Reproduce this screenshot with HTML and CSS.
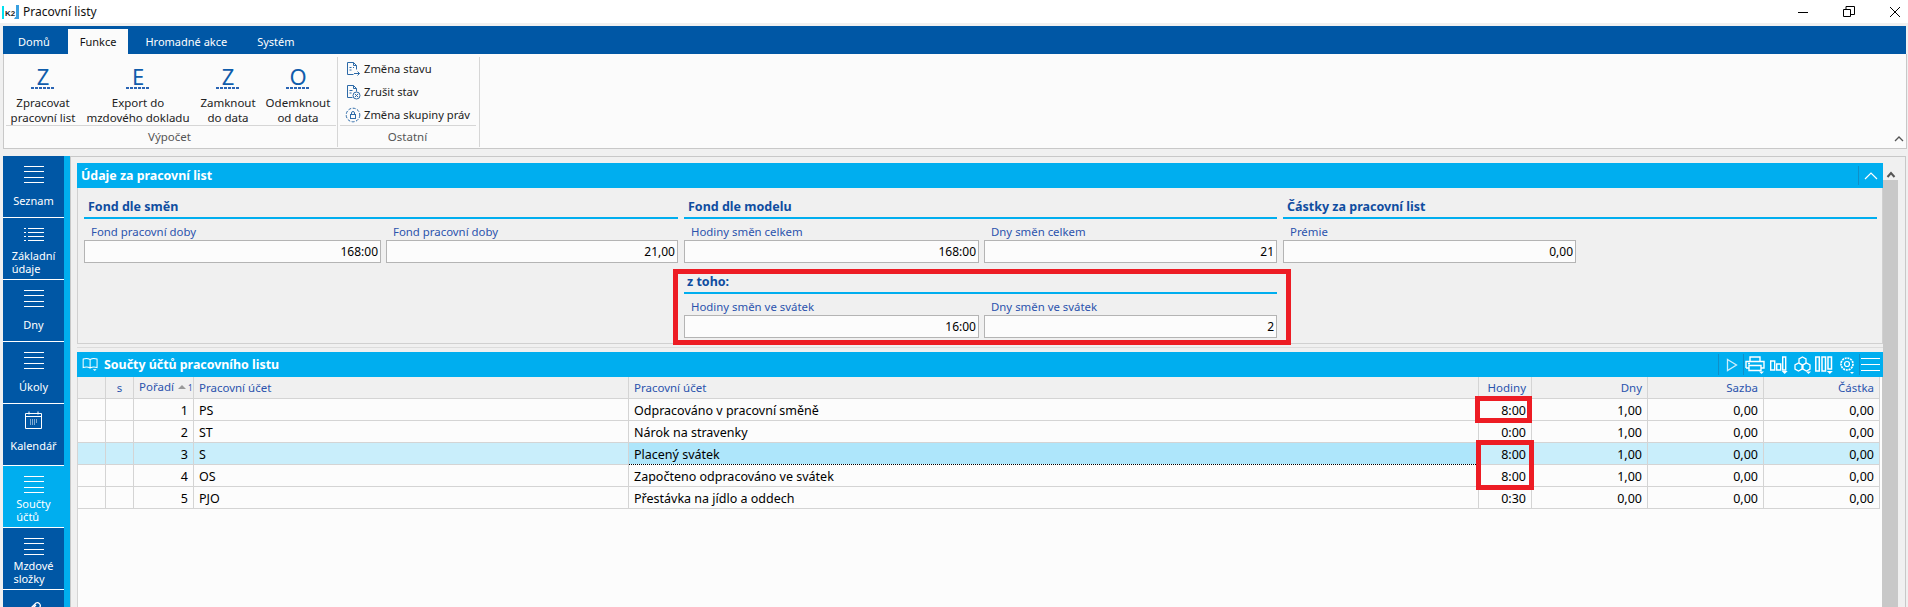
FILE: index.html
```html
<!DOCTYPE html>
<html lang="cs">
<head>
<meta charset="utf-8">
<title>Pracovní listy</title>
<link rel="stylesheet" href="styles.css">
</head>
<body>
<header class="titlebar">
  <svg class="logo" width="18" height="16" viewBox="0 0 18 16"><rect x="0" y="2" width="2" height="13" fill="#00e0f0"/><path d="M14 1h3v14h-5l2-3z" fill="#3aa0e0"/><rect x="2" y="4" width="12" height="9" fill="#fff"/><text x="3" y="11.500" class="logo-text">K2</text></svg>
  <span class="title">Pracovní listy</span>
  <div class="winbtns">
    <svg width="12" height="12" viewBox="0 0 12 12"><path d="M1 6.500h10" stroke="#000"/></svg>
    <svg width="12" height="12" viewBox="0 0 12 12"><path d="M.5 3.500h7v7h-7zM3 3V.5h8.500v8H8" fill="none" stroke="#000"/></svg>
    <svg width="12" height="12" viewBox="0 0 12 12"><path d="M1 1l10 10M11 1L1 11" stroke="#000"/></svg>
  </div>
</header>
<nav class="tabs">
  <span class="tab">Domů</span>
  <span class="tab active">Funkce</span>
  <span class="tab">Hromadné akce</span>
  <span class="tab">Systém</span>
</nav>
<section class="ribbon">
  <div class="group">
    <div class="group-body">
      <div class="bigbtn btn-a"><span class="bigicon">Z</span><span class="biglabel">Zpracovat<br>pracovní list</span></div>
      <div class="bigbtn btn-b"><span class="bigicon">E</span><span class="biglabel">Export do<br>mzdového dokladu</span></div>
      <div class="bigbtn btn-c"><span class="bigicon">Z</span><span class="biglabel">Zamknout<br>do data</span></div>
      <div class="bigbtn btn-d"><span class="bigicon">O</span><span class="biglabel">Odemknout<br>od data</span></div>
    </div>
    <div class="group-title">Výpočet</div>
  </div>
  <div class="group group-small">
    <div class="group-body small-list">
      <div class="smallbtn"><svg width="16" height="16" viewBox="0 0 16 16" fill="none" stroke="#2d6aa8"><path d="M2.500 1.500h6l3 3v4M2.500 1.500v12h6M8.500 1.500v3h3M4.500 6.500h2M4.500 9h2M8 6.500h1"/><path d="M9 12.500h5.500M12.500 10.500l2 2-2 2"/></svg>Změna stavu</div>
      <div class="smallbtn"><svg width="16" height="16" viewBox="0 0 16 16" fill="none" stroke="#2d6aa8"><path d="M2.500 1.500h6l3 3v3M2.500 1.500v12h5M8.500 1.500v3h3M4.500 6.500h3M4.500 9h2"/><circle cx="11.500" cy="11.500" r="3.500"/><path d="M10 10l3 3M13 10l-3 3"/></svg>Zrušit stav</div>
      <div class="smallbtn"><svg width="16" height="16" viewBox="0 0 16 16" fill="none" stroke="#2d6aa8"><circle cx="8" cy="8" r="6.800" stroke-dasharray="3 1.500"/><rect x="5.500" y="7.500" width="5" height="4"/><path d="M6.500 7.500V6a1.500 1.500 0 0 1 3 0v1.500"/></svg>Změna skupiny práv</div>
    </div>
    <div class="group-title">Ostatní</div>
  </div>
  <svg class="collapse" width="10" height="6" viewBox="0 0 10 6"><path d="M1 5l4-4 4 4" fill="none" stroke="#555" stroke-width="1.300"/></svg>
</section>
<main class="main">
  <aside class="sidebar">
    <div class="navitem"><span class="lines"></span><span class="navlabel">Seznam</span></div>
    <div class="navitem"><span class="lines bullets"></span><span class="navlabel">Základní<br>údaje</span></div>
    <div class="navitem"><span class="lines"></span><span class="navlabel">Dny</span></div>
    <div class="navitem"><span class="lines"></span><span class="navlabel">Úkoly</span></div>
    <div class="navitem"><svg class="calicon" width="17" height="18" viewBox="0 0 17 18" fill="none" stroke="#fff"><path d="M.5 2.500h16v15H.5zM.5 5.500h16M4 .5v3M13 .5v3"/><path d="M5 9h8M5 11h8M5 13h6" stroke-dasharray="1 1"/></svg><span class="navlabel">Kalendář</span></div>
    <div class="navitem current"><span class="lines"></span><span class="navlabel">Součty<br>účtů</span></div>
    <div class="navitem"><span class="lines"></span><span class="navlabel">Mzdové<br>složky</span></div>
    <div class="navitem"><svg class="clipicon" width="20" height="20" viewBox="0 0 20 20" fill="none" stroke="#fff" stroke-width="1.300"><path d="M4 13l8-8a3 3 0 0 1 4 4l-9 9a2 2 0 0 1-3-3l8-8"/></svg></div>
  </aside>
  <div class="strip"></div>
  <div class="content">
    <div class="panels">
      <section class="panel">
        <div class="bar">
          <span class="bar-title">Údaje za pracovní list</span>
          <span class="bar-end"><svg width="14" height="8" viewBox="0 0 14 8"><path d="M1 7l6-6 6 6" fill="none" stroke="#fff" stroke-width="1.200"/></svg></span>
        </div>
        <div class="form">
          <div class="sections">
            <div class="sec sec-a">
              <h3 class="sec-title">Fond dle směn</h3>
              <div class="fields">
                <div class="field f1"><label>Fond pracovní doby</label><div class="input">168:00</div></div>
                <div class="field f2"><label>Fond pracovní doby</label><div class="input">21,00</div></div>
              </div>
            </div>
            <div class="sec sec-b">
              <h3 class="sec-title">Fond dle modelu</h3>
              <div class="fields">
                <div class="field f3"><label>Hodiny směn celkem</label><div class="input">168:00</div></div>
                <div class="field f4"><label>Dny směn celkem</label><div class="input">21</div></div>
              </div>
              <div class="sub">
                <h3 class="sec-title sub-title">z toho:</h3>
                <div class="fields">
                  <div class="field f3"><label>Hodiny směn ve svátek</label><div class="input">16:00</div></div>
                  <div class="field f4"><label>Dny směn ve svátek</label><div class="input">2</div></div>
                </div>
                <div class="redbox form-red"></div>
              </div>
            </div>
            <div class="sec sec-c">
              <h3 class="sec-title">Částky za pracovní list</h3>
              <div class="fields">
                <div class="field f5"><label>Prémie</label><div class="input">0,00</div></div>
              </div>
            </div>
          </div>
        </div>
      </section>
      <div class="divider"></div>
      <section class="grid-panel">
        <div class="bar">
          <svg class="book" width="17" height="15" viewBox="0 0 22 19" fill="none" stroke="#fff" stroke-width="1.300"><path d="M10.500 3C8 1.500 4 1.500 1.500 2.500v11c2.500-1 6.500-1 9 .5 2.500-1.500 6.500-1.500 9-.5v-11c-2.500-1-6.500-1-9 .5zM10.500 3v11"/><path d="M14 15.500h5l-2.500 2.500z" fill="#fff" stroke="none"/></svg>
          <span class="bar-title">Součty účtů pracovního listu</span>
          <span class="tools">
            <span class="sep"></span>
            <svg class="t-play" width="12" height="14" viewBox="0 0 12 14"><path d="M1.500 1.500l9 5.500-9 5.500z" fill="none" stroke="#cdeefb" stroke-width="1.300"/></svg>
            <span class="sep"></span>
            <svg class="t-print" width="20" height="18" viewBox="0 0 20 18" fill="none" stroke="#fff" stroke-width="1.400"><path d="M5 5V1h10v4M1 12V5.500h18V12h-3M4 12H1M4 9.500h12v5H4zM3 7.500h2"/><path d="M14 15.500h5l-2.500 2.500z" fill="#fff" stroke="none"/></svg>
            <svg class="t-bars" width="18" height="18" viewBox="0 0 18 18" fill="none" stroke="#fff" stroke-width="1.400"><path d="M.7 5h4v9h-4zM6.700 8h4v6h-4zM12.700 1h3v13h-3z"/><path d="M11.700 15h6l-3 3z" fill="#fff" stroke="none"/></svg>
            <svg class="t-cubes" width="19" height="18" viewBox="0 0 19 18" fill="none" stroke="#fff" stroke-width="1.300"><path d="M9.500 1l3.500 2v4L9.500 9 6 7V3zM5.500 7L9 9v4l-3.500 2L2 13V9zM13.500 7L17 9v4l-3.500 2-3.500-2V9z"/><path d="M13 15.500h5L15.500 18z" fill="#fff" stroke="none"/></svg>
            <svg class="t-cols" width="18" height="18" viewBox="0 0 18 18" fill="none" stroke="#fff" stroke-width="1.500"><path d="M.8 1h3.500v14H.8zM7 1h3.500v14H7zM13 1h3.500v12H13z"/><path d="M11.800 15h6l-3 3z" fill="#fff" stroke="none"/></svg>
            <svg class="t-gear" width="16" height="18" viewBox="0 0 16 18" fill="none" stroke="#fff"><circle cx="8" cy="8" r="6" stroke-width="1.700" stroke-dasharray="2 .8"/><circle cx="8" cy="8" r="2.500" stroke-width="1.200"/><path d="M11 16h4l-2 2z" fill="#fff" stroke="none"/></svg>
            <span class="sep"></span>
            <span class="t-menu"></span>
          </span>
        </div>
        <div class="tablewrap">
          <table class="table">
            <colgroup><col class="c1"><col class="c2"><col class="c3"><col class="c4"><col class="c5"><col class="c6"><col class="c7"><col class="c7"><col class="c7"></colgroup>
            <thead>
              <tr><th></th><th class="ctr">s</th><th class="order">Pořadí <span class="sort"></span><span class="sortn">1</span></th><th>Pracovní účet</th><th>Pracovní účet</th><th class="num">Hodiny</th><th class="num">Dny</th><th class="num">Sazba</th><th class="num">Částka</th></tr>
            </thead>
            <tbody>
              <tr><td></td><td></td><td class="num">1</td><td>PS</td><td>Odpracováno v pracovní směně</td><td class="num">8:00</td><td class="num">1,00</td><td class="num">0,00</td><td class="num">0,00</td></tr>
              <tr><td></td><td></td><td class="num">2</td><td>ST</td><td>Nárok na stravenky</td><td class="num">0:00</td><td class="num">1,00</td><td class="num">0,00</td><td class="num">0,00</td></tr>
              <tr class="sel"><td></td><td></td><td class="num">3</td><td>S</td><td class="focus">Placený svátek</td><td class="num">8:00</td><td class="num">1,00</td><td class="num">0,00</td><td class="num">0,00</td></tr>
              <tr><td></td><td></td><td class="num">4</td><td>OS</td><td>Započteno odpracováno ve svátek</td><td class="num">8:00</td><td class="num">1,00</td><td class="num">0,00</td><td class="num">0,00</td></tr>
              <tr><td></td><td></td><td class="num">5</td><td>PJO</td><td>Přestávka na jídlo a oddech</td><td class="num">0:30</td><td class="num">0,00</td><td class="num">0,00</td><td class="num">0,00</td></tr>
            </tbody>
          </table>
          <div class="redbox red-one"></div>
          <div class="redbox red-two"></div>
        </div>
      </section>
    </div>
    <div class="scroll">
      <svg width="10" height="8" viewBox="0 0 10 8"><path d="M1.500 6.500L5 2.500l3.500 4" fill="none" stroke="#555" stroke-width="2"/></svg>
      <div class="thumb"></div>
    </div>
  </div>
</main>
</body>
</html>
```
FILE: styles.css
```css
* { box-sizing: border-box; }
html, body { margin: 0; height: 100%; }
body {
  width: 1908px; height: 607px; overflow: hidden;
  display: flex; flex-direction: column;
  background: #f0f0f0; color: #000;
  font: 12px/15px "Noto Sans", "Open Sans", sans-serif;
}
.titlebar {
  height: 23px; flex: none; background: #fff;
  display: flex; align-items: center; padding-left: 2px;
}
.logo-text { font: bold 8px "Liberation Sans", sans-serif; fill: #222; }
.title { margin-left: 3px; color: #111; }
.winbtns { margin-left: auto; display: flex; gap: 34px; padding-right: 7px; }
.tabs {
  height: 28px; flex: none; margin: 3px 2px 0 3px; background: #0057a5;
  display: flex; align-items: flex-end; color: #fff; font-size: 11px;
}
.tab { height: 25px; padding: 0 15px; line-height: 25px; }
.tab:first-child { margin-right: 3px; }
.tab.active { background: #fbfbfb; color: #111; padding: 0 12px; margin-right: 2px; }
.ribbon {
  height: 95px; flex: none; margin: 0 1px 0 3px; background: #fbfbfb;
  border: 1px solid #c8c8c8; border-top: 0; font-size: 11.5px;
  display: flex; padding: 3px 0 0 2px; position: relative; color: #222;
}
.group { border-right: 1px solid #d6d6d6; padding-right: 1px; height: 90px; display: flex; flex-direction: column; }
.group-small { margin-left: 2px; width: 140px; }
.group-body { height: 69px; flex: none; display: flex; border-bottom: 1px solid #d6d6d6; }
.group-title { height: 20px; text-align: center; line-height: 21px; color: #555; padding-right: 3px; }
.bigbtn { display: flex; flex-direction: column; align-items: center; }
.btn-a { width: 74px; } .btn-b { width: 116px; } .btn-c { width: 64px; } .btn-d { width: 76px; }
.bigicon {
  width: 24px; height: 24px; flex: none; margin-top: 8px; text-align: center;
  font-size: 22px; line-height: 22px; color: #0f5cab;
  background: repeating-linear-gradient(90deg, #2a64b4 0 3px, transparent 3px 4px) 0 22px / 100% 2px no-repeat;
}
.biglabel { margin-top: 6px; text-align: center; white-space: nowrap; }
.small-list { flex-direction: column; padding: 0 0 0 5px; width: 136px; font-size: 11.2px; }
.smallbtn { height: 23px; flex: none; display: flex; align-items: center; gap: 3px; white-space: nowrap; }
.collapse { position: absolute; right: 2px; bottom: 6px; }

.main { flex: 1; min-height: 0; display: flex; margin: 7px 0 0 3px; }
.sidebar { width: 61px; flex: none; overflow: hidden; display: flex; flex-direction: column; gap: 1px; background: #fff; }
.navitem { height: 61px; flex: none; background: #0057a5; color: #fff; display: flex; flex-direction: column; align-items: center; padding-top: 10px; font-size: 11px; }
.navitem.current { background: #00aeef; }
.lines {
  width: 20px; height: 17px; flex: none;
  background: repeating-linear-gradient(180deg, #fff 0 1px, transparent 1px 5.330px);
}
.lines.bullets { background: repeating-linear-gradient(180deg, #fff 0 1px, transparent 1px 4px) 4px 0 / 16px 13px no-repeat, repeating-linear-gradient(180deg, #fff 0 1px, transparent 1px 4px) 0 0 / 2px 13px no-repeat; }
.calicon { flex: none; margin: -3px 0 -1px 0; }
.clipicon { margin-top: -2px; }
.navlabel { height: 34px; display: flex; align-items: center; line-height: 13px; }
.strip { width: 6px; flex: none; background: #00aeef; }
.content {
  flex: 1; min-width: 0; display: flex; border-top: 1px solid #c8c8c8; border-left: 1px solid #c8c8c8; border-right: 1px solid #c8c8c8;
  margin-right: 2px; padding: 6px 6px 0 6px;
}
.panels { width: 1806px; flex: none; display: flex; flex-direction: column; }
.bar { height: 25px; flex: none; background: #00aeef; color: #fff; display: flex; align-items: center; }
.bar-title { font-weight: 700; font-size: 12.4px; padding-left: 4px; }
.bar-end { margin-left: auto; height: 19px; width: 25px; border-left: 1px solid #0f8fc8; display: flex; align-items: center; justify-content: center; }
.form { border: 1px solid #d0d0d0; border-top: 0; height: 156px; padding-left: 6px; }
.sections { display: flex; gap: 6px; }
.sec-a { width: 594px; } .sec-b { width: 593px; } .sec-c { width: 594px; }
.sec-title {
  margin: 0; height: 31px; padding: 11px 0 0 4px; border-bottom: 2px solid #00aeef;
  font-size: 12.5px; line-height: 15px; color: #0f4da0;
}
.sub-title { padding-left: 3px; }
.fields { display: flex; gap: 5px; }
.field label { display: block; height: 21px; padding: 6px 0 0 7px; line-height: 14px; font-size: 11.4px; color: #2b53ad; white-space: nowrap; }
.f1 { width: 297px; } .f2 { width: 292px; } .f3 { width: 295px; } .f4 { width: 293px; } .f5 { width: 293px; }
.input { height: 23px; border: 1px solid #b4b4b4; background: #fcfcfc; text-align: right; padding-right: 2px; line-height: 22px; }
.sub { position: relative; }
.redbox { position: absolute; border: 5px solid #ed1c24; pointer-events: none; }
.form-red { left: -11px; top: 6px; width: 618px; height: 76px; }
.divider { height: 1px; flex: none; margin-top: 3px; margin-bottom: 4px; background: #dcdcdc; }
.tools { margin-left: auto; display: flex; align-items: center; }
.book { margin-left: 5px; margin-right: 1px; }
.tools svg, .t-menu, .sep { flex: none; }
.sep { width: 1px; height: 21px; background: #0f8fc8; }
.t-play { margin: 0 5px 0 7px; }
.t-print { margin: 0 5px 0 1px; }
.t-bars { margin-right: 5px; }
.t-cubes { margin-right: 3px; }
.t-cols { margin-right: 6px; }
.t-gear { margin-right: 4px; }
.t-menu { width: 19px; height: 13px; margin: 0 3px 0 1px; background: repeating-linear-gradient(180deg, #fff 0 1px, transparent 1px 6px); }
.grid-panel { flex: 1; min-height: 0; display: flex; flex-direction: column; }
.tablewrap { position: relative; flex: 1; background: #fcfcfc; border-right: 1px solid #c8c8c8; box-shadow: inset 1px 0 #d4d4d4; }
.table { width: 1802px; table-layout: fixed; border-collapse: collapse; background: #fcfcfc; }
.c1, .c2 { width: 28px; } .c3 { width: 60px; } .c4 { width: 435px; } .c5 { width: 850px; } .c6 { width: 53px; } .c7 { width: 116px; }
.table th, .table td {
  padding: 0 5px; border-right: 1px solid #d4d4d4; border-bottom: 1px solid #d4d4d4;
  text-align: left; white-space: nowrap; overflow: hidden;
}
.table th { height: 21px; background: #f0f0f0; font-weight: 400; font-size: 11.5px; color: #2b53ad; }
.table td { height: 22px; font-size: 12.5px; padding-top: 2px; }
.table th.num, .table td.num { text-align: right; }
.table th.ctr { text-align: center; }
.table th.order { padding-right: 0; }
.sort { display: inline-block; border: 4px solid transparent; border-bottom-color: #999; border-top: 0; vertical-align: 2px; margin-left: 1px; }
.sortn { font-size: 8px; margin-left: 2px; }
.sel td { background: #c9eefb; }
.table td.focus { background: #aee6fb; border-top: 1px dotted #000; border-bottom: 1px dotted #000; }
.table th:first-child, .table td:first-child { border-left: 1px solid #d4d4d4; }
.red-one { left: 1398px; top: 19px; width: 57px; height: 27px; }
.red-two { left: 1399px; top: 63px; width: 58px; height: 50px; }
.scroll { width: 15px; flex: none; display: flex; flex-direction: column; align-items: center; margin-top: 6px; }
.scroll svg { height: 11px; flex: none; }
.thumb { width: 15px; flex: 1; background: #c8c8c8; }
```
